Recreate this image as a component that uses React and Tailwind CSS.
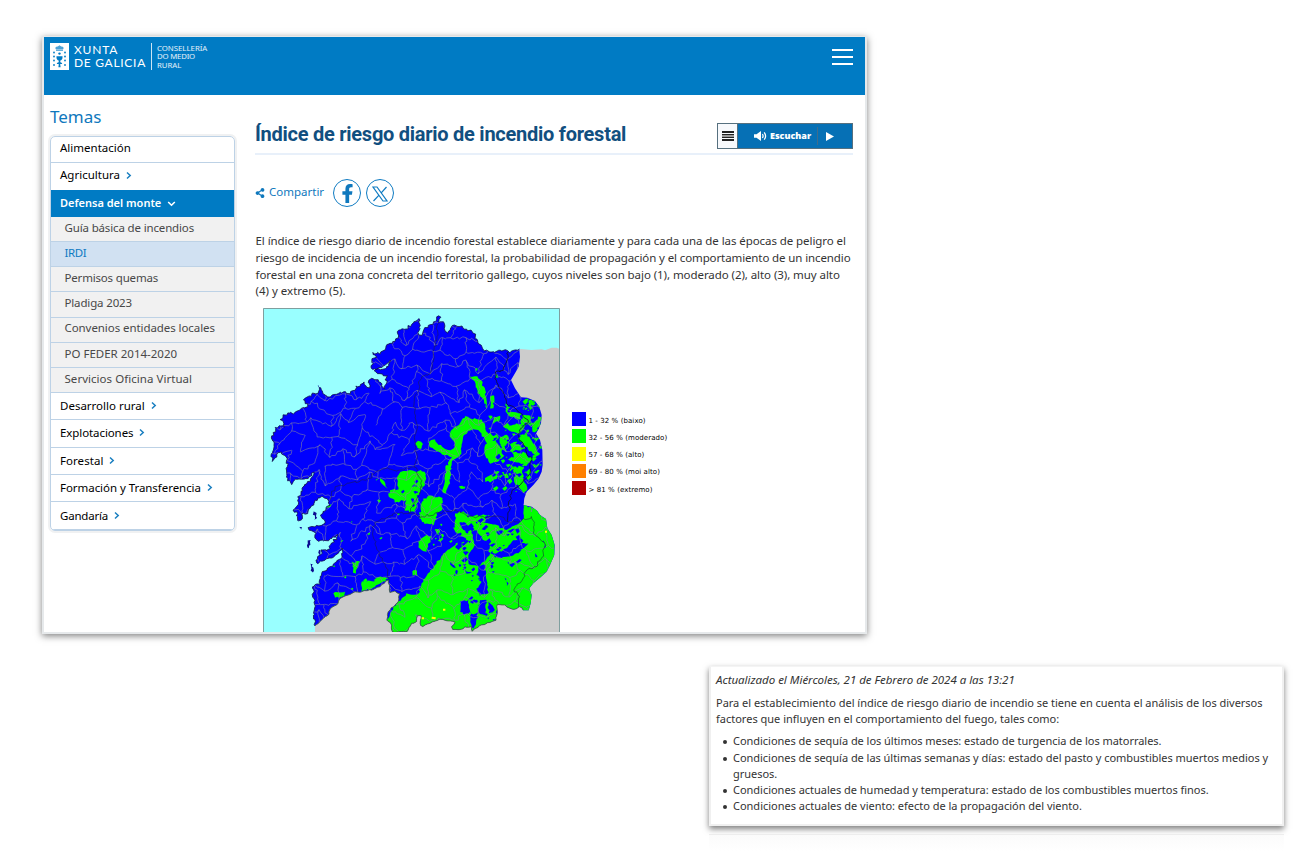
import React from "react";
import { FaShareAlt, FaFacebookF } from "react-icons/fa";

/* ---------- seeded helpers for the map drawing ---------- */
function rng(seed) {
  let s = seed;
  return () => {
    s = (s * 1664525 + 1013904223) % 4294967296;
    return s / 4294967296;
  };
}
const nums = (str) => str.trim().split(/\s+/).map((p) => p.split(",").map(Number));

function rough(pts, amp, step, seed) {
  const r = rng(seed);
  const out = [];
  for (let i = 0; i < pts.length - 1; i++) {
    const [x0, y0] = pts[i];
    const [x1, y1] = pts[i + 1];
    const n = Math.max(1, Math.round(Math.hypot(x1 - x0, y1 - y0) / step));
    for (let k = 0; k < n; k++) {
      const t = k / n;
      const a = k === 0 ? 0.3 : 1;
      out.push([x0 + (x1 - x0) * t + (r() - 0.5) * amp * a, y0 + (y1 - y0) * t + (r() - 0.5) * amp * a]);
    }
  }
  out.push(pts[pts.length - 1]);
  return out;
}
const toD = (pts) => "M" + pts.map((p) => p[0].toFixed(1) + " " + p[1].toFixed(1)).join("L");
const blob = (str, i) => {
  const p = nums(str);
  return toD(rough([...p, p[0]], 7, 7, 31 + i * 7)) + "Z";
};

/* west and north coast, from the Portuguese border to Asturias */
const COAST = nums(`180,977 178,925 172,860 195,853 197,835 200,820 215,810 245,785 262,770 262,745 250,760 235,773 210,780
185,790 188,770 200,763 198,750 215,753 228,735 245,713 248,703 230,717 205,723 190,723 180,713 182,700 162,690 160,683 180,680
200,675 210,670 197,645 205,635 215,620 225,615 222,603 200,590 190,593 175,615 165,625 158,640 145,640 138,660 128,660 128,640
115,630 125,620 130,595 140,565 155,550 175,525 178,517 160,535 140,537 120,537 110,553 98,535 95,520 98,500 95,480 92,470
80,462 70,458 65,470 52,484 48,470 55,450 57,430 50,408 62,395 60,382 75,378 88,380 85,365 75,358 85,345 98,338 115,342
133,330 145,322 158,320 145,300 152,293 168,290 172,280 190,278 192,262 205,282 225,290 245,284 265,277 285,280 300,270
302,258 315,258 328,245 335,262 345,258 342,240 355,236 372,245 380,258 388,266 395,250 390,240 398,228 375,222 358,212
370,206 390,207 402,198 405,182 390,195 370,205 348,205 355,192 352,175 365,172 353,157 375,162 392,145 400,132 412,130
428,115 430,90 445,86 455,88 470,72 485,63 493,55 495,85 488,98 500,105 507,88 520,75 540,65 550,48 557,52 550,68 565,65
568,85 578,100 585,90 595,75 620,78 635,88 655,100 665,118 680,140 690,152 715,155 760,152 765,158 780,150 793,147`);
const EAST = nums(`793,147 795,170 791,200 780,220 768,240 780,265 798,292 817,293 840,303 853,320 860,345 858,370 850,388 843,400
855,420 862,450 863,495 860,515 850,537 835,555 815,575 808,595 805,615 830,620 847,633 855,645 873,657 877,685 890,705 899,735
898,765 885,795 875,815 855,833 835,850 823,865 830,885 827,910 821,931 805,931`);
const SOUTH = nums(`805,931 793,920 780,928 765,925 750,915 727,913 727,935 723,960 705,967 680,975 660,985 652,994 650,979
630,981 615,989 593,989 590,980 600,967 580,963 555,957 525,970 503,980 495,970 498,947 487,947 485,965 470,970 455,996
412,996 410,975 395,960 400,935 415,920 430,905 434,882 420,873 405,878 400,840 375,860 350,870 320,875 300,875 280,885
255,895 245,915 225,927 222,943 205,955 190,970 180,977`);
const coast = rough(COAST, 8, 6, 5);
const south = rough(SOUTH, 4, 8, 9);
const LAND = toD([...coast, ...EAST, ...south]) + "Z";

const GREEN = [
  "645,230 660,228 677,240 687,260 693,290 697,325 687,310 677,290 665,265 660,245",
  "705,290 717,288 715,325 705,325",
  "630,348 645,355 680,358 690,375 693,395 710,405 723,425 735,440 740,462 727,485 710,480 695,475 687,450 697,430 687,412 670,390 640,392 625,410 620,440 615,465 597,480 583,510 575,505 585,480 590,470 550,455 525,440 523,425 540,418 550,435 580,450 595,445 600,430 583,405 595,385 615,370",
  "480,430 490,422 503,432 500,445 487,445",
  "718,350 735,347 732,365 715,372",
  "752,310 766,322 757,335 793,340 795,358 766,350 752,335",
  "810,345 827,348 823,368 805,378 795,365",
  "832,372 850,350 859,352 851,394 833,395",
  "752,383 785,370 810,378 795,400 775,396",
  "795,405 815,400 835,430 855,460 850,475 830,455 810,440",
  "735,412 755,405 765,425 748,440 757,455 740,450",
  "762,430 785,425 805,445 790,452 770,447",
  "775,462 805,455 825,480 815,498 792,488 770,482",
  "820,303 832,300 830,325 820,322",
  "662,205 668,203 667,212 662,212",
  "722,224 729,223 730,234 722,233",
  "690,455 725,450 732,480 705,492",
  "425,535 435,517 465,510 508,515 513,535 510,555 492,580 485,620 480,637 450,633 455,600 420,607 400,590 405,570 430,567",
  "375,533 390,545 397,567 385,555",
  "575,495 590,495 582,555 573,580 563,575 570,545",
  "505,595 525,587 562,593 563,625 545,640 537,675 510,673 493,655 497,620",
  "690,535 710,523 727,535 705,547 690,545",
  "775,500 800,500 805,535 817,570 805,580 790,555 777,545",
  "490,725 515,705 530,710 515,755 495,745",
  "472,815 487,812 490,828 474,828",
  "612,558 632,560 630,566 614,564",
  "740,515 757,520 760,535 742,530",
  "290,785 300,788 315,784 308,800 303,820 295,818 292,800",
  "235,880 270,875 268,887 240,893",
  "320,845 350,845 370,830 400,837 372,852 350,867 320,873",
  "210,620 230,612 228,620 214,623",
  "600,640 625,633 645,650 680,645 705,645 700,660 680,667 725,675 755,690 790,672 805,655 805,615 840,625 860,650 885,660 905,735 890,800 840,850 835,940 800,935 727,920 723,990 460,1000 405,1000 395,960 415,920 455,880 490,883 500,850 510,835 540,795 565,760 595,740 610,735 635,720 605,700 600,670",
];
const OVER = [
  "650,695 660,690 680,710 705,735 700,755 720,762 755,745 775,720 800,725 820,730 805,745 765,770 730,773 705,760 690,785 670,800 645,795 640,765 660,735",
  "670,800 690,795 693,835 700,880 675,887 665,865 680,845 665,825",
  "615,905 640,900 645,935 625,945 615,935",
  "675,900 693,900 690,945 670,935",
  "645,935 670,950 655,993 650,975",
  "700,905 712,915 713,935 702,940",
  "748,832 760,850 755,858",
  "585,785 605,805 590,800",
  "630,810 650,817 635,822",
  "790,600 806,600 806,655 790,665 765,675 770,655 780,640",
  "625,665 645,690 640,700 625,690",
  "840,760 848,770 842,772",
  "865,720 872,735 867,745",
  "690,660 720,655 728,670 700,670",
];
const OUTLYING = [
  "176,635 186,638 186,655 178,660",
  "132,680 140,682 138,690",
  "158,722 167,720 162,745 157,742",
  "166,790 173,792 174,818 167,812",
  "188,257 192,256 191,261",
  "192,750 198,752 194,770",
];

/* municipality borders: a warped brick grid */
function borders() {
  const r = rng(77);
  const cols = 24;
  const rows = 24;
  const P = [];
  for (let j = 0; j <= rows; j++) {
    P.push([]);
    for (let i = 0; i <= cols; i++) {
      P[j].push([30 + i * 38 + (r() - 0.5) * 30, 30 + j * 42 + (r() - 0.5) * 30 + (i % 2 ? 12 : -12)]);
    }
  }
  let d = "";
  for (let j = 0; j <= rows; j++)
    for (let i = 0; i <= cols; i++) {
      if (i < cols && r() > 0.08) d += toD(rough([P[j][i], P[j][i + 1]], 9, 9, j * 50 + i + 1));
      if (j < rows && (i + j) % 2 === 0) d += toD(rough([P[j][i], P[j + 1][i]], 9, 9, j * 70 + i + 900));
    }
  return d;
}
const BORDERS = borders();

function specks(count, seed, x, y, w, h, max) {
  const r = rng(seed);
  let d = "";
  for (let k = 0; k < count; k++) {
    const a = x + r() * w;
    const b = y + r() * h;
    const s = 3 + r() * max;
    d += `M${a.toFixed(1)} ${b.toFixed(1)}l${s.toFixed(1)} ${(-s * r()).toFixed(1)}l${(s * 0.5).toFixed(1)} ${(s * r()).toFixed(1)}l${(-s * 0.8).toFixed(1)} ${(s * 0.8).toFixed(1)}z`;
  }
  return d;
}
const GREEN_SPECKS =
  specks(70, 3, 690, 340, 165, 240, 11) +
  specks(16, 8, 800, 300, 50, 100, 10) +
  specks(12, 12, 230, 540, 240, 340, 6) +
  specks(14, 6, 520, 640, 120, 100, 9);
const BLUE_SPECKS =
  specks(60, 21, 600, 650, 190, 150, 13) +
  specks(14, 23, 590, 780, 140, 60, 6) +
  specks(14, 27, 640, 890, 90, 70, 10) +
  specks(26, 29, 700, 350, 150, 200, 9) +
  specks(10, 35, 420, 540, 70, 80, 6);

const PROVINCES = [
  "550,70 545,110 538,150 530,190 525,220 500,232 490,250 492,275 478,300 480,340 488,380 478,420 485,460 478,500 430,510 380,505 340,535 290,548 240,560 225,600",
  "478,500 500,540 490,590 460,640 430,640 380,655 352,680 360,720 375,770 400,810 402,845",
  "460,640 500,650 540,640 600,630 640,650 700,650 740,650 760,665 790,665 830,650 838,670 835,700 868,725 865,760 845,800 815,810 800,840 775,870 795,890 790,925",
];
const EAST_EDGE =
  "760,155 755,180 745,210 720,215 720,235 730,260 745,280 755,310 785,330 805,350 820,365 800,385 790,410 805,430 815,455 830,480 825,520 800,550 770,570 765,600 758,665";

function MapDrawing() {
  return (
    <svg className="block h-[324px] w-[297px] shrink-0" viewBox="24 24 891 972">
      <defs>
        <clipPath id="land">
          <path d={LAND} />
        </clipPath>
      </defs>
      <rect x="24" y="24" width="891" height="972" fill="#99ffff" />
      <path d="M793 150L797 147L830 150L860 148L870 151L890 143L905 143L915 148V996H180V977L215 920L250 870L400 800L700 400Z" fill="#cccccc" />
      <path d={LAND} fill="#0000ff" />
      {OUTLYING.map((s, i) => (
        <path key={i} d={blob(s, i)} fill="#0a0a90" />
      ))}
      <g clipPath="url(#land)">
        <path d={GREEN.map(blob).join("") + GREEN_SPECKS} fill="#00ff00" />
        <path d={OVER.map(blob).join("") + BLUE_SPECKS} fill="#0000ff" />
        <path d={BORDERS} fill="none" stroke="#8080a0" strokeWidth="2.6" opacity="0.7" />
        <path d={PROVINCES.map((p, i) => toD(rough(nums(p), 9, 8, i + 40))).join("")} fill="none" stroke="#202040" strokeWidth="2.5" opacity="0.65" />
        <path d={toD(rough(nums(EAST_EDGE), 8, 7, 50))} fill="none" stroke="#101030" strokeWidth="3" opacity="0.8" />
      </g>
      <path d={toD(coast)} fill="none" stroke="#101048" strokeWidth="2.4" />
      <path d={toD(south)} fill="none" stroke="#406040" strokeWidth="2.5" />
      <path d="M500 955h7M530 953l12 2M564 929h7M870 695h6" stroke="#ffff00" strokeWidth="6" />
      <path d="M25.5 996V25.5H913.5V996" fill="none" stroke="#7f9f9f" strokeWidth="3" />
    </svg>
  );
}

function Crest() {
  return (
    <svg className="block h-[27px] w-[19px]" viewBox="0 0 19 27">
      <rect width="19" height="27" fill="#fff" />
      <g fill="#007bc4">
        <path d="M5.800 6.300C4.600 4.400 6.200 3.200 7.800 3.500L9.500 2.200l1.700 1.300C12.800 3.200 14.400 4.400 13.200 6.300Z" opacity="0.7" />
        <rect x="6" y="6.700" width="7" height="0.900" />
        <circle cx="9.500" cy="10.600" r="1.200" />
        <path d="M6.500 13.300h6v1.500c0 1.600-1 2.400-2.200 2.700v1.700c1.400.3 1.900.9 1.900 1.800H6.800c0-.9.5-1.500 1.900-1.800v-1.700c-1.200-.3-2.200-1.100-2.200-2.700z" />
        <path d="M8.900 20h1.200l.5 4.300H8.400z" />
        {[9.5, 13.5, 17.5, 22].map((y) => (
          <g key={y}>
            <circle cx="4" cy={y} r="0.900" />
            <circle cx="15" cy={y} r="0.900" />
          </g>
        ))}
      </g>
    </svg>
  );
}

function Speaker() {
  return (
    <svg className="mt-[7px] ml-[16px] h-[10px] w-[13px]" viewBox="0 0 13 10">
      <path d="M0 3.200h2.500L7 0v10L2.500 6.800H0z" fill="#fff" />
      <path d="M8.400 3q1.400 2 0 4M10.200 1.300q2.800 3.700 0 7.400" fill="none" stroke="#fff" strokeWidth="1.300" />
    </svg>
  );
}

function Chevron({ down }) {
  return down ? (
    <svg className="ml-[6px] h-[9px] w-[9px]" viewBox="0 0 9 9">
      <path d="M1.200 3l3.300 3.200L7.800 3" fill="none" stroke="#fff" strokeWidth="1.600" />
    </svg>
  ) : (
    <svg className="ml-[5px] h-[9px] w-[8px]" viewBox="0 0 8 9">
      <path d="M2 1.500l3.200 3L2 7.500" fill="none" stroke="#1a7fc0" strokeWidth="1.500" />
    </svg>
  );
}

const SUBS = [
  ["Guía básica de incendios", "tracking-[-0.15px]"],
  ["IRDI", "tracking-[-0.4px]"],
  ["Permisos quemas", "tracking-[-0.18px]"],
  ["Pladiga 2023", "tracking-[-0.15px]"],
  ["Convenios entidades locales", "tracking-[-0.07px]"],
  ["PO FEDER 2014-2020", "tracking-normal"],
  ["Servicios Oficina Virtual", "tracking-[0.04px]"],
];
const REST = [
  ["Desarrollo rural", "tracking-normal"],
  ["Explotaciones", "tracking-[-0.09px]"],
  ["Forestal", "tracking-[0.05px]"],
  ["Formación y Transferencia", "tracking-[-0.05px]"],
  ["Gandaría", "tracking-[-0.2px]"],
];
const LEGEND = [
  ["bg-[#0000ff]", "1 - 32 % (baixo)"],
  ["bg-[#00ff00]", "32 - 56 % (moderado)"],
  ["bg-[#ffff00]", "57 - 68 % (alto)"],
  ["bg-[#ff8000]", "69 - 80 % (moi alto)"],
  ["bg-[#b00000]", "> 81 % (extremo)"],
];
const CONDITIONS = [
  ["Condiciones de sequía de los últimos meses: estado de turgencia de los matorrales.", "tracking-[-0.035px]"],
  ["Condiciones de sequía de las últimas semanas y días: estado del pasto y combustibles muertos medios y gruesos.", "tracking-[-0.035px]"],
  ["Condiciones actuales de humedad y temperatura: estado de los combustibles muertos finos.", "tracking-[-0.02px]"],
  ["Condiciones actuales de viento: efecto de la propagación del viento.", "tracking-[-0.01px]"],
];

function Sidebar() {
  return (
    <aside className="w-[186px] shrink-0">
      <h2 className="h-[40px] pt-[10px] text-[17px] leading-[24px] text-[#0f78bd]">Temas</h2>
      <nav className="mt-px h-[395px] w-[185px] overflow-hidden rounded-[5px] border border-[#bdd2e6] text-[11.5px] text-black shadow-[0_0_0_2px_#f0f1f2]">
        <div className="flex h-[26px] items-center border-b border-[#bdd2e6] pb-[3px] pl-[9px]">Alimentación</div>
        <div className="flex h-[27px] items-center pb-[3px] pl-[9px]">
          Agricultura
          <Chevron />
        </div>
        <div className="flex h-[27px] items-center bg-[#007bc4] pb-px pl-[9px] text-[11px] font-semibold text-white">
          Defensa del monte
          <Chevron down />
        </div>
        {SUBS.map(([t, c]) => (
          <div
            key={t}
            className={
              "flex h-[25.14px] items-center border-b border-[#bdd2e6] pb-[3px] pl-[13.500px] " +
              (t === "IRDI" ? "bg-[#d1e1f2] text-[#0f7bc2] " : "bg-[#f1f1f1] text-[#484848] ") +
              c
            }
          >
            {t}
          </div>
        ))}
        {REST.map(([t, c]) => (
          <div key={t} className={"flex h-[27.4px] items-center border-b border-[#bdd2e6] pb-px pl-[9px] " + c}>
            {t}
            <Chevron />
          </div>
        ))}
      </nav>
    </aside>
  );
}

export default function App() {
  return (
    <div className="flex h-[851px] w-[1316px] flex-col overflow-hidden bg-white font-['Noto_Sans',sans-serif]">
      <section className="mt-[36px] ml-[42px] h-[598px] w-[825px] shrink-0 border-2 border-t border-[#e6e9eb] bg-white shadow-[0_2px_7px_0_rgba(0,0,0,0.5)]">
        <header className="flex h-[58px] justify-between bg-[#007bc4] text-white">
          <div className="flex items-start pt-[6px] pl-[6px]">
            <Crest />
            <div className="ml-[5px] font-['Lato',sans-serif] text-[12px] leading-[12.500px]">
              <div className="mt-[1px] tracking-[0.8px]">XUNTA</div>
              <div className="tracking-[0.7px]">DE GALICIA</div>
            </div>
            <div className="ml-[5px] h-[27px] w-px bg-white/80" />
            <div className="ml-[5px] pt-px text-[7.800px] leading-[8.300px] text-white/90">
              <div>CONSELLERÍA</div>
              <div className="tracking-[-0.2px]">DO MEDIO</div>
              <div>RURAL</div>
            </div>
          </div>
          <div className="mt-[12px] mr-[12px] flex h-[16px] w-[21px] flex-col justify-between">
            <div className="h-[2px] bg-white" />
            <div className="h-[2px] bg-white" />
            <div className="h-[2px] bg-white" />
          </div>
        </header>
        <div className="flex h-[537px] overflow-hidden pl-[6px]">
          <Sidebar />
          <main className="ml-[19px] w-[598px]">
            <div className="flex h-[60px] justify-between border-b-2 border-[#e8f0fa]">
              <h1 className="pt-[24px] font-['Roboto',sans-serif] text-[20px] leading-[30px] font-bold tracking-[-0.26px] whitespace-nowrap text-[#114f80]">
                Índice de riesgo diario de incendio forestal
              </h1>
              <div className="mt-[28px] flex h-[26px] w-[136px] border border-[#56707f] bg-[#0670b5] text-white">
                <div className="flex w-[20px] flex-col items-center justify-center border-r border-[#56707f] bg-[#f7f9fc]">
                  <div className="h-[10px] w-[12px] border-y-2 border-[#222]">
                    <div className="mt-px h-[4px] border-y-[1.500px] border-[#222] bg-[#999]" />
                  </div>
                </div>
                <Speaker />
                <span className="ml-[3px] font-['Open_Sans',sans-serif] text-[9px] leading-[24px] font-extrabold">Escuchar</span>
                <div className="mt-[3px] ml-[6px] h-[18px] w-px bg-[#3f6c8c]" />
                <svg className="mt-[8px] ml-[8px] h-[9px] w-[8px]" viewBox="0 0 8 9">
                  <path d="M0 0L8 4.500L0 9Z" fill="#fff" />
                </svg>
              </div>
            </div>
            <div className="mt-[24px] flex h-[28px] items-center text-[#0f78bd]">
              <FaShareAlt className="h-[10px] w-[10px]" />
              <span className="ml-[4px] pb-[3px] text-[11.5px]">Compartir</span>
              <div className="ml-[9px] flex h-[28px] w-[28px] items-center justify-center rounded-full border-[1.500px] border-[#0f7bc2]">
                <FaFacebookF className="mt-px h-[19px] w-[17px]" />
              </div>
              <div className="ml-[5px] flex h-[28px] w-[28px] items-center justify-center rounded-full border-[1.500px] border-[#0f7bc2]">
                <svg className="mt-[2px] h-[16px] w-[16px]" viewBox="0 0 16 16">
                  <path d="M1 1h4l10 14h-4zM14.500 1L9 7.200M7 9.200L1.500 15" fill="none" stroke="#0f7bc2" strokeWidth="1.200" />
                </svg>
              </div>
            </div>
            <div className="mt-[26px] pl-[0.500px] text-[11.5px] leading-[16.800px] whitespace-nowrap text-[#333]">
              <div className="tracking-[-0.07px]">
                El índice de riesgo diario de incendio forestal establece diariamente y para cada una de las épocas de peligro el
              </div>
              <div className="tracking-[-0.112px]">
                riesgo de incidencia de un incendio forestal, la probabilidad de propagación y el comportamiento de un incendio
              </div>
              <div className="tracking-[-0.07px]">
                forestal en una zona concreta del territorio gallego, cuyos niveles son bajo (1), moderado (2), alto (3), muy alto
              </div>
              <div>(4) y extremo (5).</div>
            </div>
            <div className="mt-[8px] ml-[8px] flex">
              <MapDrawing />
              <div className="mt-[104px] ml-[12px] flex flex-col gap-[3px]">
                {LEGEND.map(([c, t]) => (
                  <div key={t} className="flex h-[14.200px] items-center">
                    <div className={"h-[14px] w-[13.500px] " + c} />
                    <span className="ml-[3px] pt-[3px] font-['DejaVu_Sans',sans-serif] text-[7px] leading-[10px] tracking-[0.08px] whitespace-nowrap text-black">
                      {t}
                    </span>
                  </div>
                ))}
              </div>
            </div>
          </main>
        </div>
      </section>

      <section className="mt-[32px] ml-[709px] h-[160px] w-[575px] shrink-0 border-2 border-t border-[#f0f0f0] border-t-[#f4f4f4] bg-white pt-[4px] pl-[5px] text-[11px] text-[#333] shadow-[0_3px_6px_0_rgba(0,0,0,0.5)]">
        <p className="text-[11.5px] leading-[17px] tracking-[-0.02px] whitespace-nowrap italic">
          Actualizado el Miércoles, 21 de Febrero de 2024 a las 13:21
        </p>
        <div className="mt-[7px] leading-[16.200px] whitespace-nowrap">
          <div className="tracking-[-0.02px]">
            Para el establecimiento del índice de riesgo diario de incendio se tiene en cuenta el análisis de los diversos
          </div>
          <div>factores que influyen en el comportamiento del fuego, tales como:</div>
        </div>
        <ul className="mt-[6px] pl-[7px] leading-[16.100px]">
          {CONDITIONS.map(([t, c]) => (
            <li key={t} className="flex">
              <span className="mt-[7px] mr-[6px] h-[4px] w-[4px] shrink-0 rounded-full bg-[#333]" />
              <span className={"w-[545px] " + c}>{t}</span>
            </li>
          ))}
        </ul>
      </section>
      <div className="relative mt-[8px] ml-[709px] h-[17px] w-[575px] shrink-0 border-t border-[#ededed] bg-gradient-to-b from-[#fbfbfb] to-white" />
    </div>
  );
}
